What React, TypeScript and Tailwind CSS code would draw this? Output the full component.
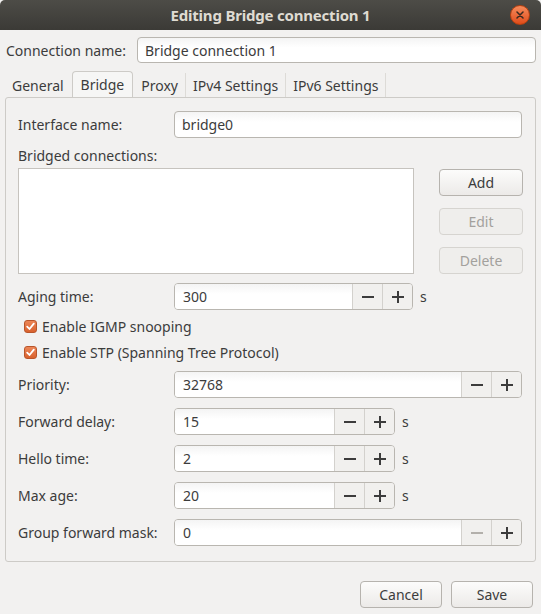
import React from "react";

const font = { fontFamily: '"Noto Sans", "Open Sans", sans-serif' };

function Spin({ value, width, minusDisabled }: { value: string; width: string; minusDisabled?: boolean }) {
  return (
    <div className={`flex h-[27px] ${width} rounded-[4px] border border-[#b9b6b0] overflow-hidden`}>
      <div className="flex-1 flex items-center pl-[8px] bg-gradient-to-b from-[#f4f4f4] to-[#ffffff] to-[40%] text-[14px] text-[#3c3c3c]">
        {value}
      </div>
      <div className="w-[30px] border-l border-[#d3d1cd] bg-[#f1f0ee] flex items-center justify-center">
        <svg width="12" height="12" viewBox="0 0 12 12">
          <rect x="0" y="5" width="12" height="2" fill={minusDisabled ? "#b3b0ab" : "#3c3c3c"} />
        </svg>
      </div>
      <div className="w-[30px] border-l border-[#d3d1cd] bg-[#f1f0ee] flex items-center justify-center">
        <svg width="12" height="12" viewBox="0 0 12 12">
          <rect x="0" y="5" width="12" height="2" fill="#3c3c3c" />
          <rect x="5" y="0" width="2" height="12" fill="#3c3c3c" />
        </svg>
      </div>
    </div>
  );
}

function Btn({ children, disabled, className }: { children: React.ReactNode; disabled?: boolean; className?: string }) {
  return (
    <div
      className={`h-[27px] flex items-center justify-center rounded-[4px] border text-[14px] ${
        disabled
          ? "border-[#d6d4d0] bg-[#efeeec] text-[#a3a19d]"
          : "border-[#b6b3ae] bg-gradient-to-b from-[#fcfcfb] to-[#eceae8] text-[#3c3c3c]"
      } ${className ?? ""}`}
    >
      {children}
    </div>
  );
}

function Check({ label }: { label: string }) {
  return (
    <div className="flex items-center h-[26px] pl-[6px]">
      <div className="w-[13px] h-[13px] rounded-[3px] bg-gradient-to-b from-[#ec8657] to-[#d9612d] border border-[#b9552a] flex items-center justify-center">
        <svg width="9" height="9" viewBox="0 0 9 9">
          <path d="M1.2 4.6 L3.5 7 L7.8 1.6" stroke="#ffffff" strokeWidth="1.8" fill="none" strokeLinecap="round" strokeLinejoin="round" />
        </svg>
      </div>
      <span className="ml-[5px] text-[14px] text-[#3c3c3c]">{label}</span>
    </div>
  );
}

function Row({ label, children, unit }: { label: string; children: React.ReactNode; unit?: boolean }) {
  return (
    <div className="flex items-center h-[27px]">
      <div className="w-[156px] text-[14px] text-[#3c3c3c]">{label}</div>
      {children}
      {unit && <span className="ml-[7px] text-[14px] text-[#3c3c3c]">s</span>}
    </div>
  );
}

export default function App() {
  const tabs = ["General", "Bridge", "Proxy", "IPv4 Settings", "IPv6 Settings"];
  return (
    <div className="w-[541px] h-[614px] bg-[#f2f1f0] flex flex-col overflow-hidden" style={font}>
      <div className="h-[30px] bg-gradient-to-b from-[#4d4c47] to-[#3b3a36] flex items-center relative rounded-t-[5px]">
        <div className="flex-1 text-center text-[15px] font-bold tracking-[-0.2px] text-[#dfdbd2]">Editing Bridge connection 1</div>
        <div className="absolute right-[11px] top-[5px] w-[20px] h-[20px] rounded-full bg-gradient-to-b from-[#f58a5a] to-[#df4b16] border border-[#b8400f] flex items-center justify-center">
          <svg width="8" height="8" viewBox="0 0 8 8">
            <path d="M1 1 L7 7 M7 1 L1 7" stroke="#3a2a20" strokeWidth="1.5" strokeLinecap="round" />
          </svg>
        </div>
      </div>

      <div className="px-[5px] flex flex-col">
        <div className="flex items-center h-[26px] mt-[7px]">
          <div className="w-[132px] pl-[1px] text-[14px] text-[#3c3c3c]">Connection name:</div>
          <div className="flex-1 h-[26px] rounded-[4px] border border-[#b9b6b0] bg-gradient-to-b from-[#f4f4f4] to-[#ffffff] to-[40%] flex items-center pl-[7px] text-[14px] text-[#3c3c3c]">
            Bridge connection 1
          </div>
        </div>

        <div className="flex items-end h-[26px] mt-[8px]">
          {tabs.map((t, i) => {
            const active = t === "Bridge";
            return (
              <div key={t} className="flex items-end h-full">
                {i > 0 && !active && tabs[i - 1] !== "Bridge" && <div className="w-px h-[24px] bg-[#dddbd7]" />}
                <div
                  className={
                    active
                      ? "h-[26px] px-[8px] flex items-center text-[14px] text-[#3c3c3c] bg-[#f6f6f5] border border-b-0 border-[#cdcbc7] rounded-t-[4px] mx-[1px]"
                      : "h-[24px] px-[7px] flex items-center text-[14px] text-[#3c3c3c]"
                  }
                >
                  {t}
                </div>
              </div>
            );
          })}
          <div className="w-px h-[24px] bg-[#dddbd7]" />
        </div>

        <div className="h-[465px] border border-[#cdcbc7] rounded-[3px] px-[12px] pt-[13px] flex flex-col">
          <Row label="Interface name:">
            <div className="w-[348px] h-[27px] rounded-[4px] border border-[#b9b6b0] bg-gradient-to-b from-[#f4f4f4] to-[#ffffff] to-[40%] flex items-center pl-[7px] text-[14px] text-[#3c3c3c]">
              bridge0
            </div>
          </Row>
          <div className="mt-[7px] h-[20px] flex items-center text-[14px] text-[#3c3c3c]">Bridged connections:</div>
          <div className="mt-[3px] flex">
            <div className="w-[396px] h-[106px] bg-white border border-[#c6c3be]" />
            <div className="ml-[25px] w-[84px] pt-[1px] flex flex-col gap-[12px]">
              <Btn>Add</Btn>
              <Btn disabled>Edit</Btn>
              <Btn disabled>Delete</Btn>
            </div>
          </div>
          <div className="mt-[9px]">
            <Row label="Aging time:" unit>
              <Spin value="300" width="w-[239px]" />
            </Row>
          </div>
          <div className="mt-[3px]">
            <Check label="Enable IGMP snooping" />
            <Check label="Enable STP (Spanning Tree Protocol)" />
          </div>
          <div className="mt-[6px] flex flex-col gap-[10px]">
            <Row label="Priority:">
              <Spin value="32768" width="w-[348px]" />
            </Row>
            <Row label="Forward delay:" unit>
              <Spin value="15" width="w-[221px]" />
            </Row>
            <Row label="Hello time:" unit>
              <Spin value="2" width="w-[221px]" />
            </Row>
            <Row label="Max age:" unit>
              <Spin value="20" width="w-[221px]" />
            </Row>
            <Row label="Group forward mask:">
              <Spin value="0" width="w-[348px]" minusDisabled />
            </Row>
          </div>
        </div>

        <div className="mt-[19px] flex justify-end gap-[9px] pr-[3px]">
          <Btn className="w-[82px]">Cancel</Btn>
          <Btn className="w-[82px]">Save</Btn>
        </div>
      </div>
    </div>
  );
}
